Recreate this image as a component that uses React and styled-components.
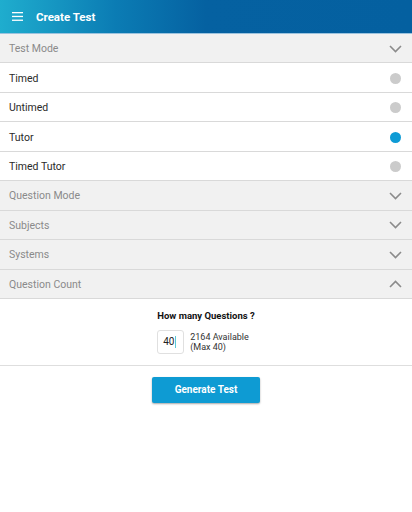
import React from "react";
import styled, { createGlobalStyle } from "styled-components";

const Global = createGlobalStyle`
  html, body { margin: 0; padding: 0; background: #fff; }
  body { font-family: Roboto, "Noto Sans", Arial, sans-serif; }
  * { box-sizing: border-box; }
`;

const Page = styled.div`
  width: 412px;
  min-height: 512px;
  background: #fff;
  display: flex;
  flex-direction: column;
`;

const Header = styled.header`
  height: 34px;
  display: flex;
  align-items: center;
  gap: 13px;
  padding-left: 12px;
  background: linear-gradient(90deg, #1fadce 0%, #0b7cb4 28%, #0561a1 50%, #0460a0 100%);
  border-bottom: 1px solid #9cc3de;
`;

const Title = styled.h1`
  margin: 0;
  font-size: 11.5px;
  font-weight: 700;
  color: #fff;
`;

const Row = styled.div`
  height: 29.45px;
  display: flex;
  align-items: center;
  justify-content: space-between;
  padding: 1px 10px 0 9px;
  border-bottom: 1px solid #d9d9d9;
  background: ${(p) => (p.$section ? "#f1f1f1" : "#fff")};
  color: ${(p) => (p.$section ? "#8a8a8a" : "#2a2a2a")};
  font-size: 10.5px;
`;

const Radio = styled.span`
  width: 11px;
  height: 11px;
  margin-right: 1px;
  border-radius: 50%;
  background: ${(p) => (p.$on ? "#0e9bd5" : "#cbcbcb")};
`;

const Count = styled.div`
  height: 67px;
  border-bottom: 1px solid #dedede;
  display: flex;
  flex-direction: column;
  align-items: center;
  padding-top: 11px;
  gap: 9px;
`;

const Question = styled.div`
  font-size: 9.5px;
  font-weight: 700;
  color: #111;
`;

const InputLine = styled.div`
  display: flex;
  align-items: center;
  gap: 6px;
  margin-left: -6px;
`;

const Box = styled.div`
  width: 27px;
  height: 24px;
  border: 1px solid #e0e0e0;
  border-radius: 3px;
  font-size: 10px;
  color: #222;
  display: flex;
  align-items: center;
  padding-left: 5px;
`;

const Caret = styled.span`
  width: 1px;
  height: 12px;
  background: #5bc8d6;
  margin-left: 1px;
`;

const Avail = styled.div`
  font-size: 9px;
  line-height: 10px;
  color: #333;
`;

const ButtonWrap = styled.div`
  display: flex;
  justify-content: center;
  padding-top: 11px;
`;

const Button = styled.button`
  width: 108px;
  height: 26px;
  border: none;
  border-radius: 2px;
  background: #0e9bd3;
  color: #fff;
  font-family: Roboto, Arial, sans-serif;
  font-size: 10px;
  font-weight: 700;
  box-shadow: 0 1px 2px rgba(0, 0, 0, 0.35);
`;

const Chevron = ({ up }) => (
  <svg width="13" height="8" viewBox="0 0 13 8">
    <path
      d={up ? "M1 7 L6.5 1.5 L12 7" : "M1 1 L6.5 6.5 L12 1"}
      fill="none"
      stroke="#8b8b8b"
      strokeWidth="1.6"
    />
  </svg>
);

const Menu = () => (
  <svg width="11" height="9" viewBox="0 0 11 9">
    <rect x="0" y="0" width="11" height="1.3" fill="#fff" />
    <rect x="0" y="3.8" width="11" height="1.3" fill="#fff" />
    <rect x="0" y="7.6" width="11" height="1.3" fill="#fff" />
  </svg>
);

const modes = [
  { label: "Timed", on: false },
  { label: "Untimed", on: false },
  { label: "Tutor", on: true },
  { label: "Timed Tutor", on: false },
];

export default function App() {
  return (
    <Page>
      <Global />
      <Header>
        <Menu />
        <Title>Create Test</Title>
      </Header>
      <Row $section>
        Test Mode
        <Chevron />
      </Row>
      {modes.map((m) => (
        <Row key={m.label}>
          {m.label}
          <Radio $on={m.on} />
        </Row>
      ))}
      {["Question Mode", "Subjects", "Systems"].map((s) => (
        <Row $section key={s}>
          {s}
          <Chevron />
        </Row>
      ))}
      <Row $section>
        Question Count
        <Chevron up />
      </Row>
      <Count>
        <Question>How many Questions ?</Question>
        <InputLine>
          <Box>
            40
            <Caret />
          </Box>
          <Avail>
            2164 Available
            <br />
            (Max 40)
          </Avail>
        </InputLine>
      </Count>
      <ButtonWrap>
        <Button>Generate Test</Button>
      </ButtonWrap>
    </Page>
  );
}
